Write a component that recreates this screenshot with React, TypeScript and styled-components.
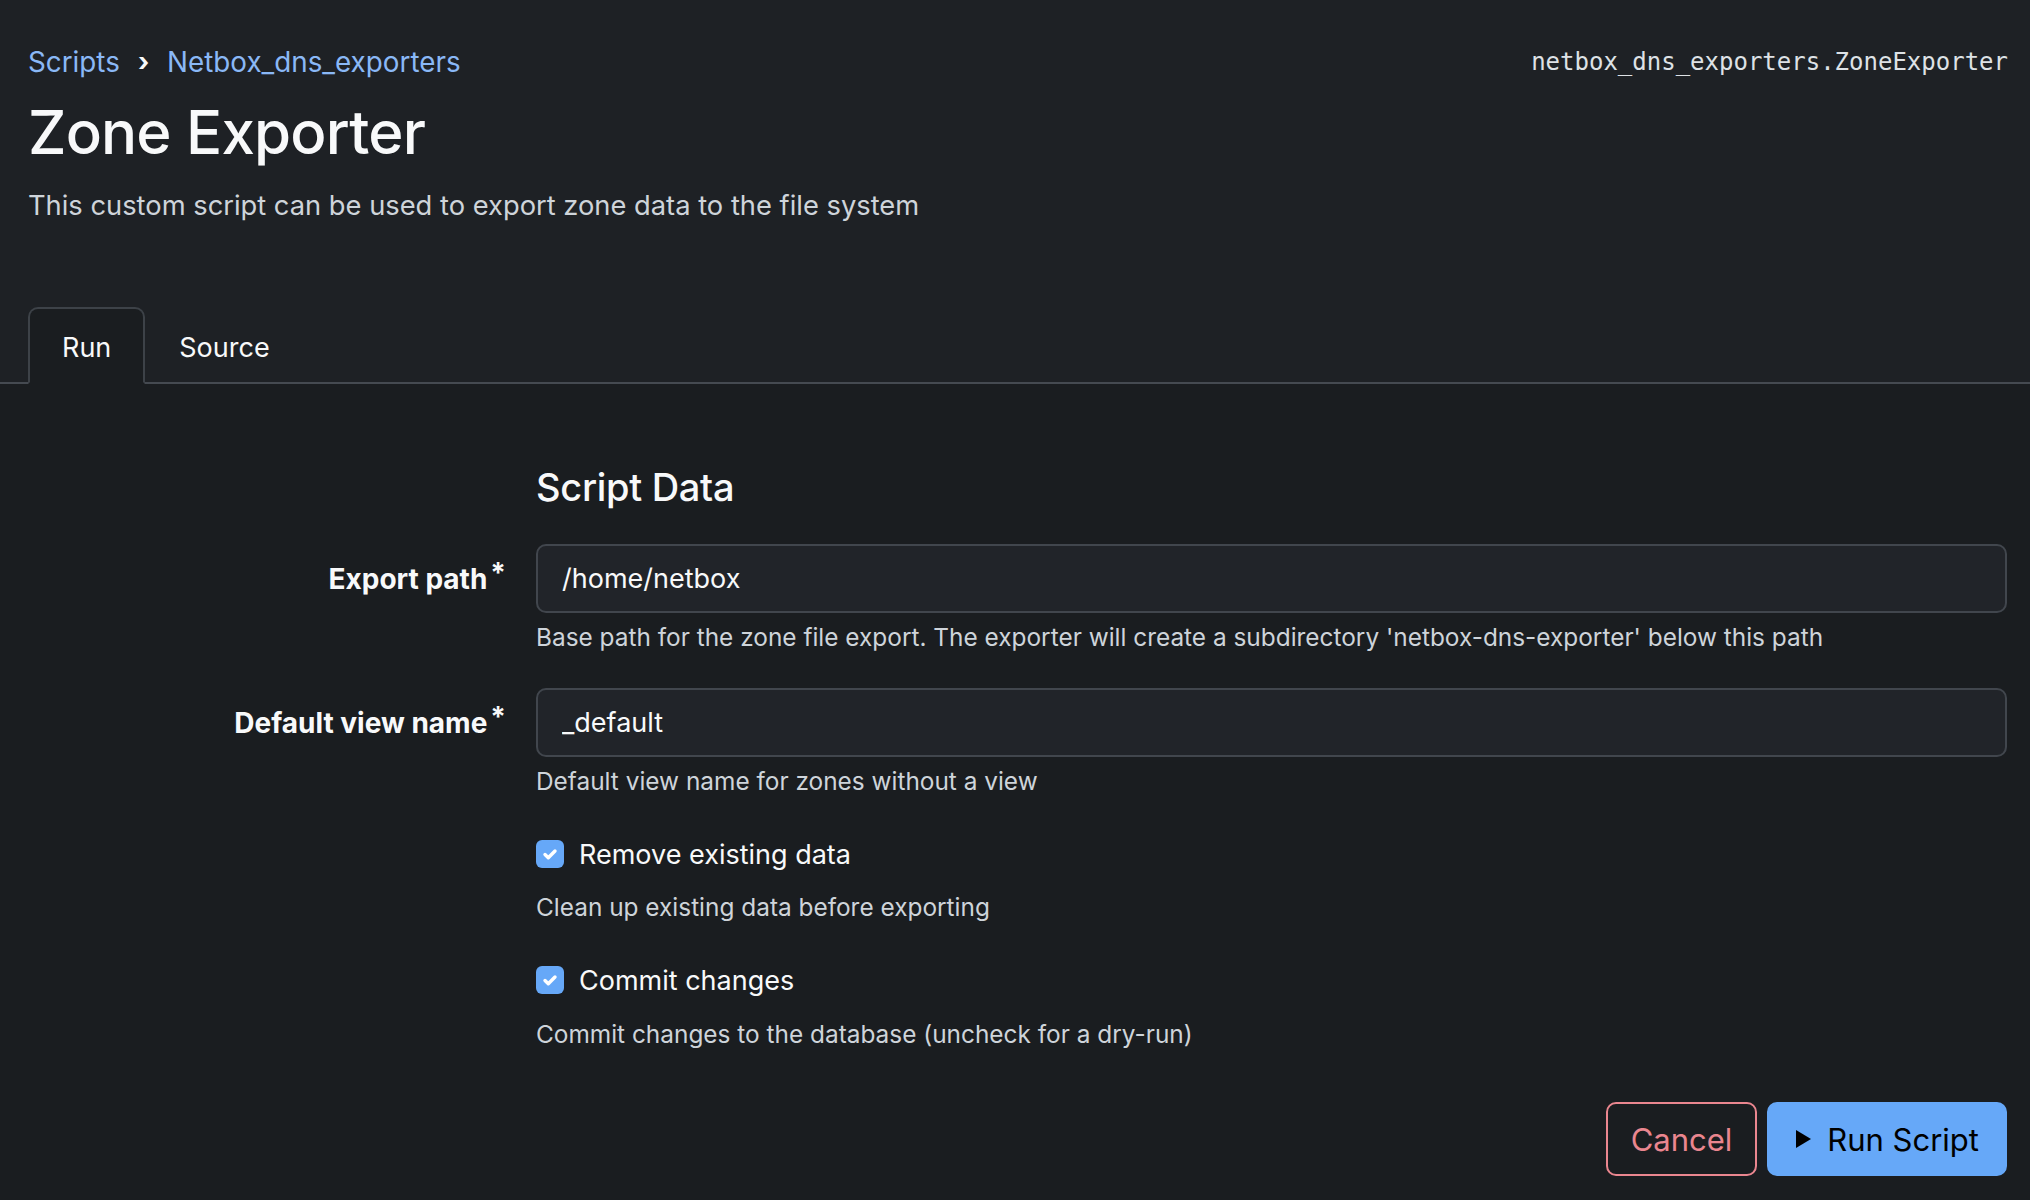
import React from "react";
import styled, { createGlobalStyle } from "styled-components";

const GlobalStyle = createGlobalStyle`
  html, body { margin: 0; padding: 0; }
  body {
    background: #1a1d20;
    color: #f8f9fa;
    font-family: Inter, "Noto Sans", "Liberation Sans", sans-serif;
    font-size: 26px;
  }
  * { box-sizing: border-box; }
`;

const Page = styled.div`
  min-height: 100vh;
  display: flex;
  flex-direction: column;
`;

const Header = styled.header`
  background: #1e2125;
  padding: 44px 22px 0 28px;
`;

const TopRow = styled.div`
  display: flex;
  justify-content: space-between;
  align-items: center;
  height: 36px;
`;

const Breadcrumb = styled.nav`
  display: flex;
  align-items: center;
  gap: 18px;
  font-size: 27.8px;
  line-height: 36px;
`;

const Crumb = styled.a`
  color: #8ab8f6;
  text-decoration: none;
`;

const Sep = styled.span`
  color: #f8f9fa;
  font-weight: 700;
  font-size: 26px;
`;

const Ident = styled.code`
  font-family: "DejaVu Sans Mono", "Liberation Mono", monospace;
  font-size: 24px;
  color: #dee2e6;
`;

const Title = styled.h1`
  margin: 15px 0 0;
  font-size: 60px;
  line-height: 74px;
  font-weight: 500;
  letter-spacing: -0.8px;
  color: #f8f9fa;
`;

const Subtitle = styled.p`
  margin: 17px 0 0;
  font-size: 27.3px;
  line-height: 39px;
  color: #ced4da;
`;

const TabBar = styled.div`
  margin: 82px -22px 0 -28px;
  padding-left: 28px;
  display: flex;
  border-bottom: 2px solid #454a51;
`;

const Tab = styled.button<{ $active?: boolean }>`
  font-family: inherit;
  font-size: 27px;
  height: 77px;
  padding: 4px 32px 0;
  margin-bottom: -2px;
  color: #f8f9fa;
  background: ${(p) => (p.$active ? "#1a1d20" : "transparent")};
  border: 2px solid ${(p) => (p.$active ? "#3d4248" : "transparent")};
  border-bottom-color: ${(p) => (p.$active ? "#1a1d20" : "transparent")};
  border-radius: 10px 10px 0 0;
  cursor: pointer;
`;

const Body = styled.main`
  flex: 1;
  padding: 80px 23px 40px 28px;
`;

const Form = styled.div`
  display: grid;
  grid-template-columns: 478px 1fr;
  column-gap: 30px;
`;

const Heading = styled.h2`
  grid-column: 2;
  margin: 0 0 34px;
  font-size: 38px;
  line-height: 46px;
  font-weight: 500;
  letter-spacing: -0.3px;
  color: #f8f9fa;
`;

const Label = styled.label`
  grid-column: 1;
  height: 69px;
  display: flex;
  align-items: center;
  justify-content: flex-end;
  font-weight: 700;
  font-size: 28px;
  color: #f8f9fa;
`;

const Req = styled.sup`
  font-size: 28px;
  margin-left: 3px;
  position: relative;
  top: -6px;
`;

const Field = styled.div<{ $gap?: number }>`
  grid-column: 2;
  margin-bottom: ${(p) => p.$gap ?? 34}px;
`;

const Input = styled.input`
  width: 100%;
  height: 69px;
  padding: 0 24px;
  font-family: inherit;
  font-size: 27px;
  color: #f8f9fa;
  background: #212429;
  border: 2px solid #41464d;
  border-radius: 10px;
  outline: none;
`;

const Help = styled.div<{ $mt?: number }>`
  margin-top: ${(p) => p.$mt ?? 7}px;
  font-size: 24.4px;
  line-height: 34px;
  color: #ced4da;
`;

const CheckRow = styled.label`
  display: flex;
  align-items: center;
  gap: 15px;
  height: 40px;
  font-size: 27px;
  color: #f8f9fa;
`;

const Box = styled.span`
  width: 28px;
  height: 28px;
  border-radius: 6px;
  background: #66a8f8;
  display: inline-flex;
  align-items: center;
  justify-content: center;
`;

const Actions = styled.div`
  display: flex;
  justify-content: flex-end;
  gap: 10px;
  margin-top: 51px;
`;

const Button = styled.button<{ $variant: "danger" | "primary" }>`
  height: 74px;
  padding: 0 ${(p) => (p.$variant === "primary" ? 26 : 23)}px;
  font-family: inherit;
  font-size: 31px;
  border-radius: 10px;
  display: inline-flex;
  align-items: center;
  gap: 15px;
  cursor: pointer;
  color: ${(p) => (p.$variant === "primary" ? "#000" : "#ea868f")};
  background: ${(p) => (p.$variant === "primary" ? "#66a8f8" : "transparent")};
  border: 2px solid ${(p) => (p.$variant === "primary" ? "#66a8f8" : "#ea868f")};
`;

const Check = () => (
  <svg width="20" height="20" viewBox="0 0 20 20" fill="none">
    <path d="M5 10.5l3.3 3.3L15 7" stroke="#fff" strokeWidth="3.4" strokeLinecap="round" strokeLinejoin="round" />
  </svg>
);

const Play = () => (
  <svg width="17" height="20" viewBox="0 0 17 20">
    <path d="M1 1v18l15-9z" fill="#000" />
  </svg>
);

export default function App() {
  return (
    <Page>
      <GlobalStyle />
      <Header>
        <TopRow>
          <Breadcrumb>
            <Crumb href="#">Scripts</Crumb>
            <Sep>›</Sep>
            <Crumb href="#">Netbox_dns_exporters</Crumb>
          </Breadcrumb>
          <Ident>netbox_dns_exporters.ZoneExporter</Ident>
        </TopRow>
        <Title>Zone Exporter</Title>
        <Subtitle>This custom script can be used to export zone data to the file system</Subtitle>
        <TabBar>
          <Tab $active>Run</Tab>
          <Tab>Source</Tab>
        </TabBar>
      </Header>
      <Body>
        <Form>
          <Heading>Script Data</Heading>
          <Label>
            Export path<Req>*</Req>
          </Label>
          <Field>
            <Input defaultValue="/home/netbox" />
            <Help>
              Base path for the zone file export. The exporter will create a subdirectory
              'netbox-dns-exporter' below this path
            </Help>
          </Field>
          <Label>
            Default view name<Req>*</Req>
          </Label>
          <Field $gap={36}>
            <Input defaultValue="_default" />
            <Help>Default view name for zones without a view</Help>
          </Field>
          <Field $gap={36}>
            <CheckRow>
              <Box>
                <Check />
              </Box>
              Remove existing data
            </CheckRow>
            <Help $mt={16}>Clean up existing data before exporting</Help>
          </Field>
          <Field $gap={0}>
            <CheckRow>
              <Box>
                <Check />
              </Box>
              Commit changes
            </CheckRow>
            <Help $mt={17}>Commit changes to the database (uncheck for a dry-run)</Help>
          </Field>
        </Form>
        <Actions>
          <Button $variant="danger">Cancel</Button>
          <Button $variant="primary">
            <Play />
            Run Script
          </Button>
        </Actions>
      </Body>
    </Page>
  );
}
